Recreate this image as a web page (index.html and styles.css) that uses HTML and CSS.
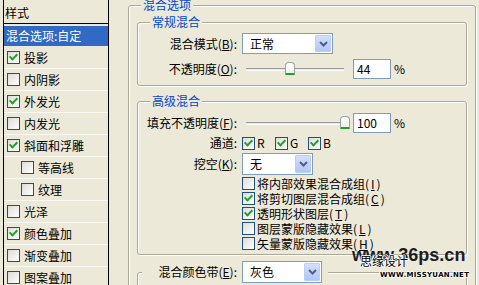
FILE: index.html
```html
<!DOCTYPE html>
<html lang="zh-CN">
<head>
    <meta charset="UTF-8">
    <title>图层样式</title>
    <link rel="stylesheet" href="styles.css">
</head>
<body>

    <div class="dialog">
        <div class="styles">
            <div class="styles-head">样式</div>
            <ul class="style-list">
                <li class="selected">混合选项:自定</li>
                <li><span class="cb on"></span>投影</li>
                <li><span class="cb"></span>内阴影</li>
                <li><span class="cb on"></span>外发光</li>
                <li><span class="cb"></span>内发光</li>
                <li><span class="cb on"></span>斜面和浮雕</li>
                <li class="sub"><span class="cb"></span>等高线</li>
                <li class="sub"><span class="cb"></span>纹理</li>
                <li><span class="cb"></span>光泽</li>
                <li><span class="cb on"></span>颜色叠加</li>
                <li><span class="cb"></span>渐变叠加</li>
                <li><span class="cb"></span>图案叠加</li>
            </ul>
        </div>

        <div class="main">
            <fieldset class="group outer">
                <legend>混合选项</legend>

                <fieldset class="group inner normal">
                    <legend>常规混合</legend>
                    <div class="row tall">
                        <label>混合模式(<u>B</u>):</label>
                        <div class="select mode"><span>正常</span><i class="drop"><svg width="9" height="6" viewBox="0 0 9 6"><polyline points="1,1 4.5,4.5 8,1" fill="none" stroke="#4d6185" stroke-width="2"/></svg></i></div>
                    </div>
                    <div class="row">
                        <label>不透明度(<u>O</u>):</label>
                        <div class="slider"><span class="track"><i class="thumb" style="left: 44%"></i></span></div>
                        <div class="num">44</div>
                        <span class="pct">%</span>
                    </div>
                </fieldset>

                <fieldset class="group inner advanced">
                    <legend>高级混合</legend>
                    <div class="row">
                        <label>填充不透明度(<u>F</u>):</label>
                        <div class="slider"><span class="track"><i class="thumb" style="left: 100%"></i></span></div>
                        <div class="num">100</div>
                        <span class="pct">%</span>
                    </div>
                    <div class="row">
                        <label>通道:</label>
                        <span class="ch"><span class="cb on"></span>R</span>
                        <span class="ch"><span class="cb on"></span>G</span>
                        <span class="ch"><span class="cb on"></span>B</span>
                    </div>
                    <div class="row knock">
                        <label>挖空(<u>K</u>):</label>
                        <div class="select knockout"><span>无</span><i class="drop"><svg width="9" height="6" viewBox="0 0 9 6"><polyline points="1,1 4.5,4.5 8,1" fill="none" stroke="#4d6185" stroke-width="2"/></svg></i></div>
                    </div>
                    <div class="opts">
                        <div class="opt"><span class="cb"></span>将内部效果混合成组(<u>I</u>)</div>
                        <div class="opt"><span class="cb on"></span>将剪切图层混合成组(<u>C</u>)</div>
                        <div class="opt"><span class="cb on"></span>透明形状图层(<u>T</u>)</div>
                        <div class="opt"><span class="cb"></span>图层蒙版隐藏效果(<u>L</u>)</div>
                        <div class="opt"><span class="cb"></span>矢量蒙版隐藏效果(<u>H</u>)</div>
                    </div>
                </fieldset>

                <fieldset class="group inner band">
                    <legend>
                        <label>混合颜色带(<u>E</u>):</label>
                        <div class="select gray"><span>灰色</span><i class="drop"><svg width="9" height="6" viewBox="0 0 9 6"><polyline points="1,1 4.5,4.5 8,1" fill="none" stroke="#4d6185" stroke-width="2"/></svg></i></div>
                    </legend>
                </fieldset>
            </fieldset>
        </div>
    </div>

    <div class="watermark">
        <div class="wm-url">www.36ps.cn</div>
        <div class="wm-cn">思缘设计</div>
        <div class="wm-en">WWW.MISSYUAN.NET</div>
    </div>

</body>
</html>
```

FILE: styles.css
```css
body {
    margin: 0;
    width: 479px;
    height: 285px;
    overflow: hidden;
    position: relative;
    background: #ece9d8;
    color: #000;
    font-family: "Noto Sans CJK SC", "Liberation Sans", sans-serif;
    font-size: 12px;
    line-height: 14px;
}
u {
    text-decoration-thickness: 1px;
    text-underline-offset: 1px;
}
.dialog {
    display: flex;
    height: 285px;
}

/* left style list */
.styles {
    flex: none;
    width: 104px;
    margin-left: 3px;
    border-left: 1px solid #000;
    border-right: 1px solid #000;
}
.styles-head {
    height: 23px;
    line-height: 26px;
    padding-left: 1px;
    border-bottom: 1px solid #000;
}
.style-list {
    list-style: none;
    margin: 0;
    padding: 2px 0 0;
}
.style-list li {
    display: flex;
    align-items: center;
    gap: 4px;
    height: 21px;
    padding-left: 3px;
    border-bottom: 1px solid #f9f8f2;
}
.style-list li.sub {
    padding-left: 17px;
}
.style-list li.selected {
    height: 20px;
    padding-left: 2px;
    background: #316ac5;
    color: #fff;
    border-bottom-color: #ece9d8;
}

/* checkbox */
.cb {
    flex: none;
    position: relative;
    width: 11px;
    height: 11px;
    border: 1px solid #1c5180;
    background: linear-gradient(135deg, #dcdcd7, #fff);
}
.cb.on::after {
    content: "";
    position: absolute;
    left: 3px;
    top: 0;
    width: 3px;
    height: 6px;
    border: solid #21a121;
    border-width: 0 2px 2px 0;
    transform: rotate(45deg);
}

/* right side */
.main {
    flex: 1;
    padding: 0 3px 0 19px;
}
.group {
    margin: 0;
    padding: 0;
    min-width: 0;
    border: 1px solid #aca899;
    border-radius: 3px;
    box-shadow: inset 1px 1px 0 #fff, 1px 1px 0 #fff;
}
.group legend {
    padding: 0 2px;
    color: #0046d5;
    background: #ece9d8;
    line-height: 14px;
}
.outer {
    margin-top: -2px;
    padding: 3px 8px 0;
}
.outer > legend {
    margin-left: 4px;
}
.inner > legend {
    margin-left: 12px;
}
.normal {
    padding: 4px 0 6px;
}
.advanced {
    margin-top: 8px;
    padding: 5px 0 3px;
}
.band {
    margin-top: 6px;
    height: 60px;
}
.band > legend {
    display: flex;
    align-items: center;
    margin-left: 4px;
    padding: 0 6px 0 0;
    color: #000;
}
.band > legend label {
    width: 95px;
}

.row {
    display: flex;
    align-items: center;
    height: 20px;
}
.row.tall {
    height: 21px;
    margin-bottom: 5px;
}
.row.knock {
    height: 22px;
}
.row label,
.band label {
    flex: none;
    width: 99px;
    margin-right: 5px;
    text-align: right;
}

/* dropdown */
.select {
    display: flex;
    align-items: center;
    justify-content: space-between;
    box-sizing: border-box;
    height: 22px;
    padding: 1px 1px 1px 7px;
    border: 1px solid #7f9db9;
    background: #fff;
}
.select.mode {
    width: 91px;
    height: 21px;
}
.select.knockout {
    width: 71px;
}
.select.gray {
    width: 80px;
}
.drop {
    display: flex;
    align-items: center;
    justify-content: center;
    align-self: stretch;
    width: 14px;
    border: 1px solid #b9cdf5;
    border-radius: 1px;
    background: linear-gradient(#d3e0fd, #b2c6f5);
}

/* slider */
.slider {
    flex: none;
    width: 108px;
    margin-right: 3px;
    height: 14px;
    display: flex;
    align-items: center;
}
.track {
    position: relative;
    width: 98px;
    height: 1px;
    margin-left: 4px;
    border-top: 1px solid #9d9c99;
    border-bottom: 1px solid #fff;
}
.thumb {
    position: absolute;
    top: -7px;
    width: 8px;
    height: 10px;
    margin-left: -4px;
    background: linear-gradient(#fff, #f0f0ea);
    border: 1px solid #99a2a8;
    border-bottom: 2px solid #21a121;
    border-radius: 4px 4px 1px 1px;
}
.num {
    box-sizing: border-box;
    width: 38px;
    height: 20px;
    padding: 2px 3px;
    border: 1px solid #7f9db9;
    background: #fff;
}
.pct {
    margin-left: 3px;
}

/* channels */
.ch {
    display: flex;
    align-items: center;
    gap: 2px;
    width: 33px;
}

/* option checkboxes */
.opts {
    margin-top: 1px;
}
.opt {
    display: flex;
    align-items: center;
    gap: 2px;
    height: 15px;
    padding-left: 104px;
}

/* watermark */
.watermark {
    position: absolute;
    left: 352px;
    top: 245px;
    width: 120px;
    height: 36px;
}
.wm-url {
    font-family: "Liberation Sans", sans-serif;
    font-weight: bold;
    font-size: 18px;
    line-height: 20px;
    color: #1c1c28;
}
.wm-cn {
    position: absolute;
    left: 8px;
    top: 9px;
    font-size: 12px;
    color: #000;
    text-shadow: 1px 0 #fff, -1px 0 #fff, 0 1px #fff, 0 -1px #fff;
}
.wm-en {
    position: absolute;
    left: 28px;
    top: 23px;
    font-family: "DejaVu Sans", sans-serif;
    font-weight: bold;
    font-size: 7px;
    letter-spacing: 0.3px;
    color: #000;
    text-shadow: 1px 0 #fff, -1px 0 #fff, 0 1px #fff, 0 -1px #fff;
}
```
